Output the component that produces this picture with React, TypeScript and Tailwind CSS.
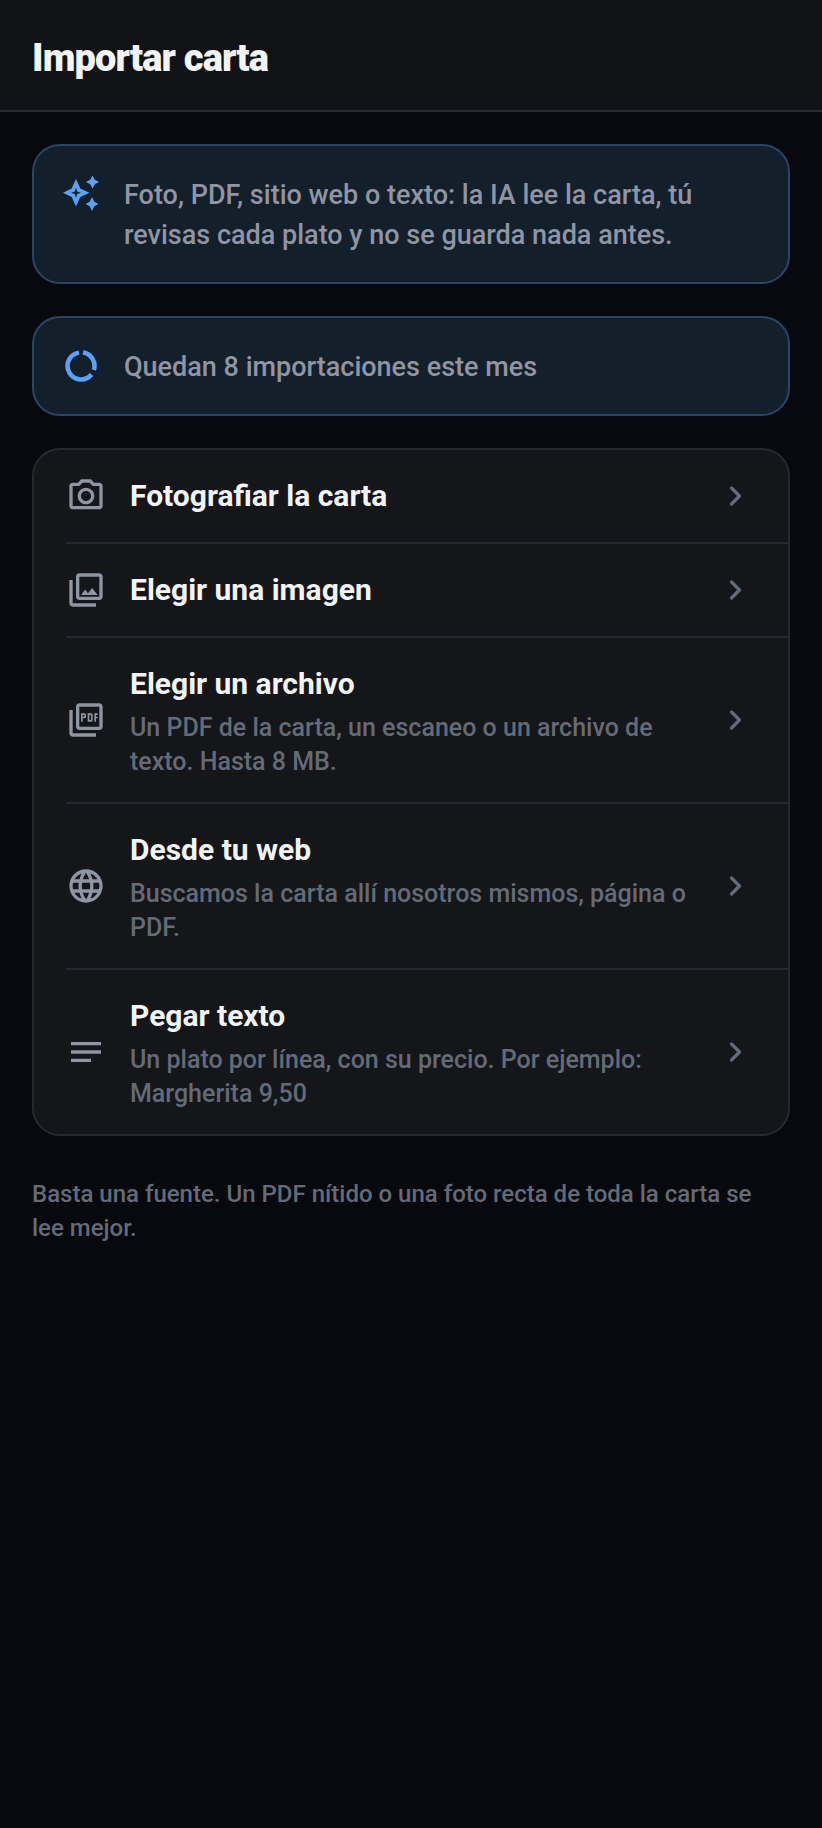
import React from 'react';
import { MdOutlinePhotoCamera, MdOutlinePhotoLibrary, MdOutlinePictureAsPdf, MdLanguage, MdNotes } from 'react-icons/md';

const rows = [
  { icon: MdOutlinePhotoCamera, title: 'Fotografiar la carta' },
  { icon: MdOutlinePhotoLibrary, title: 'Elegir una imagen' },
  { icon: MdOutlinePictureAsPdf, title: 'Elegir un archivo', sub: 'Un PDF de la carta, un escaneo o un archivo de texto. Hasta 8 MB.' },
  { icon: MdLanguage, title: 'Desde tu web', sub: 'Buscamos la carta allí nosotros mismos, página o PDF.' },
  { icon: MdNotes, title: 'Pegar texto', sub: 'Un plato por línea, con su precio. Por ejemplo: Margherita 9,50' },
];

const Sparkles = () => (
  <svg viewBox="0 0 36 36" className="w-9 h-9 text-[#5aa2f5] overflow-visible" fill="currentColor">
    <path fillRule="evenodd" d="M14 5 L18.300 14.500 L27.500 18.700 L18.300 23 L14 32.500 L9.700 23 L1 18.700 L9.700 14.500 Z M14 13.500 L12.800 17.500 L9 18.700 L12.800 20 L14 24 L15.200 20 L19 18.700 L15.200 17.500 Z" />
    <path d="M30.500 1.500 L32.800 5.700 L37 8 L32.800 10.300 L30.500 14.500 L28.200 10.300 L24 8 L28.200 5.700 Z" />
    <path d="M30 23 L32.300 27.700 L36.500 30 L32.300 32.300 L30 37 L27.700 32.300 L23.500 30 L27.700 27.700 Z" />
  </svg>
);

const Quota = () => (
  <svg viewBox="0 0 36 36" className="w-9 h-9 text-[#5aa2f5]" fill="none" stroke="currentColor" strokeWidth="4.500">
    <path d="M17 4.600 A13.500 13.500 0 1 0 29.500 26.500" />
    <path d="M21 4.600 A13.500 13.500 0 0 1 31.900 22" />
  </svg>
);

const Chevron = () => (
  <svg viewBox="0 0 36 36" className="w-9 h-9 shrink-0 text-[#646b77]" fill="none" stroke="currentColor" strokeWidth="3.200" strokeLinecap="round" strokeLinejoin="round">
    <path d="M13.500 10 L21.500 18 L13.500 26" />
  </svg>
);

export default function App() {
  return (
    <div className="min-h-[1828px] bg-[#07090e] font-['Roboto',sans-serif]">
      <header className="h-[112px] flex items-center px-8 bg-[#101216] border-b-2 border-[#262a30]">
        <h1 className="mt-[6px] text-[38px] font-black text-[#f3f4f6] tracking-[-0.85px]">Importar carta</h1>
      </header>

      <main className="px-8 pt-8 flex flex-col gap-8">
        <div className="flex gap-[26px] rounded-[28px] border-2 border-[#2b4568] bg-[#141f2c] pl-[28px] pr-8 pt-[29px] h-[140px]">
          <div className="shrink-0 -mt-[1px]"><Sparkles /></div>
          <p className="text-[27px] leading-[40px] font-medium text-[#8f95a3]">
            Foto, PDF, sitio web o texto: la IA lee la carta, tú revisas cada plato y no se guarda nada antes.
          </p>
        </div>

        <div className="flex items-center gap-[26px] rounded-[28px] border-2 border-[#2b4568] bg-[#141f2c] pl-[28px] pr-8 h-[100px]">
          <Quota />
          <p className="mt-[2px] text-[27px] leading-[40px] font-medium text-[#8f95a3]">Quedan 8 importaciones este mes</p>
        </div>

        <div className="rounded-[28px] border-2 border-[#262a30] bg-[#14161a] overflow-hidden">
          {rows.map((row, i) => {
            const Icon = row.icon;
            return (
              <div key={row.title} className={i > 0 ? 'ml-8 border-t-2 border-[#262a30]' : 'ml-8'}>
                <div className={row.sub ? 'flex items-center gap-6 pr-[34px] h-[164px]' : 'flex items-center gap-6 pr-[34px] h-[92px]'}>
                  <Icon className="w-10 h-10 shrink-0 text-[#8f95a3]" />
                  <div className={row.sub ? 'flex-1 min-w-0 pt-[4px]' : 'flex-1 min-w-0'}>
                    <div className="text-[30px] leading-[36px] font-bold text-[#f3f4f6]">{row.title}</div>
                    {row.sub && <div className="mt-[9px] text-[25px] leading-[34px] font-medium text-[#646b77]">{row.sub}</div>}
                  </div>
                  <Chevron />
                </div>
              </div>
            );
          })}
        </div>

        <p className="text-[24px] leading-[34px] font-medium text-[#646b77] pt-[9px] pr-2">
          Basta una fuente. Un PDF nítido o una foto recta de toda la carta se lee mejor.
        </p>
      </main>
    </div>
  );
}
